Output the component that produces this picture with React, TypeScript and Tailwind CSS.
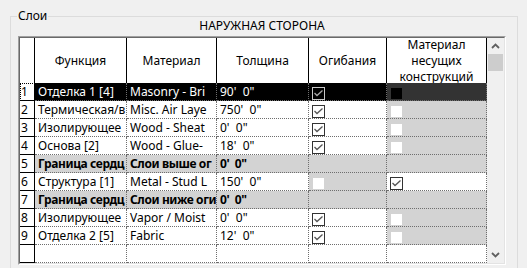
type Box = 'on' | 'onSel' | 'off' | 'offSel' | 'none'

type Layer = {
  n: string
  func: string
  mat: string
  thick: string
  wrap: Box
  struct: Box
  core?: boolean
  sel?: boolean
}

const layers: Layer[] = [
  { n: '1', func: 'Отделка 1 [4]', mat: 'Masonry - Bri', thick: `90'  0"`, wrap: 'onSel', struct: 'offSel', sel: true },
  { n: '2', func: 'Термическая/в', mat: 'Misc. Air Laye', thick: `750'  0"`, wrap: 'on', struct: 'off' },
  { n: '3', func: 'Изолирующее', mat: 'Wood - Sheat', thick: `0'  0"`, wrap: 'on', struct: 'off' },
  { n: '4', func: 'Основа [2]', mat: 'Wood - Glue-', thick: `18'  0"`, wrap: 'on', struct: 'off' },
  { n: '5', func: 'Граница сердц', mat: 'Слои выше ог', thick: `0'  0"`, wrap: 'none', struct: 'none', core: true },
  { n: '6', func: 'Структура [1]', mat: 'Metal - Stud L', thick: `150'  0"`, wrap: 'off', struct: 'on' },
  { n: '7', func: 'Граница сердц', mat: 'Слои ниже оги', thick: `0'  0"`, wrap: 'none', struct: 'none', core: true },
  { n: '8', func: 'Изолирующее', mat: 'Vapor / Moist', thick: `0'  0"`, wrap: 'on', struct: 'off' },
  { n: '9', func: 'Отделка 2 [5]', mat: 'Fabric', thick: `12'  0"`, wrap: 'on', struct: 'off' },
  { n: '', func: '', mat: '', thick: '', wrap: 'none', struct: 'none' },
]

function Check({ kind }: { kind: Box }) {
  if (kind === 'none') return null
  if (kind === 'off') return <div className="mt-[4px] ml-[3px] w-[13px] h-[13px] border border-[#d3d3d3] bg-white" />
  if (kind === 'offSel') return <div className="mt-[4px] ml-[3px] w-[13px] h-[13px] border border-[#333333] bg-black" />
  const sel = kind === 'onSel'
  return (
    <div
      className={
        sel
          ? 'mt-[4px] ml-[3px] w-[13px] h-[13px] border border-[#c8c8c8] bg-black'
          : 'mt-[4px] ml-[3px] w-[13px] h-[13px] border border-[#333333] bg-white'
      }
    >
      <svg width="11" height="11" viewBox="0 0 11 11">
        <polyline
          points="1.5,5 4,7.5 9.5,2.5"
          fill="none"
          stroke={sel ? '#a8a8a8' : '#555555'}
          strokeWidth="1.3"
        />
      </svg>
    </div>
  )
}

const cell = 'h-[18px] border-r border-b border-dotted border-[#6e6e6e] overflow-hidden whitespace-pre pl-[3px] leading-[17px]'

export default function App() {
  return (
    <div
      className="w-[527px] h-[268px] overflow-hidden bg-[#f0f0f0] pt-[16px] pl-[10px] text-[12px] text-black"
      style={{ fontFamily: '"Noto Sans", "Liberation Sans", sans-serif' }}
    >
      {/* группа «Слои» */}
      <div className="relative w-[508px] h-[270px] border border-[#dcdcdc] pl-[7px]">
        <span className="absolute -top-[9px] left-[6px] px-[1px] bg-[#f0f0f0] leading-[16px]">Слои</span>

        <div className="w-[488px] h-[15px] leading-[15px] pt-[1px] text-center">НАРУЖНАЯ СТОРОНА</div>

        {/* таблица слоёв */}
        <div className="mt-[4px] w-[488px] border-t border-l border-[#a0a0a0] border-r border-b border-r-white border-b-white">
          <div className="flex border-t border-l border-[#696969] border-r border-b border-r-[#e3e3e3] border-b-[#e3e3e3] bg-white">
            <div className="grid grid-cols-[15px_92px_90px_92px_78px_100px] grid-rows-[45px] auto-rows-[18px] w-[467px]">
              <div className="border-r border-black" />
              {['Функция', 'Материал', 'Толщина', 'Огибания'].map((h) => (
                <div key={h} className="border-r border-black flex items-center justify-center">
                  {h}
                </div>
              ))}
              <div className="border-r border-black flex flex-col items-center justify-center text-center leading-[16px]">
                <span>Материал</span>
                <span>несущих</span>
                <span>конструкций</span>
              </div>

              {layers.map((r, i) => {
                const bg = r.sel
                  ? 'bg-black text-white'
                  : r.core
                    ? 'bg-[#d3d3d3] font-bold tracking-[-0.4px]'
                    : 'bg-white'
                const wrapBg = r.sel ? 'bg-black' : r.core || r.wrap === 'off' ? 'bg-[#d3d3d3]' : 'bg-white'
                const structBg = r.sel ? 'bg-[#333333]' : r.core || r.struct === 'off' ? 'bg-[#d3d3d3]' : 'bg-white'
                return [
                  <div
                    key={`n${i}`}
                    className={
                      r.sel
                        ? 'h-[18px] border-r border-b border-black pl-[1px] leading-[17px] bg-white outline-1 outline-dotted outline-black -outline-offset-1'
                        : 'h-[18px] border-r border-b border-black pl-[1px] leading-[17px] bg-white'
                    }
                  >
                    {r.n}
                  </div>,
                  <div key={`f${i}`} className={`${cell} ${bg}`}>{r.func}</div>,
                  <div key={`m${i}`} className={`${cell} ${bg}`}>{r.mat}</div>,
                  <div key={`t${i}`} className={`${cell} ${bg}`}>{r.thick}</div>,
                  <div key={`w${i}`} className={`h-[18px] border-r border-b border-dotted border-[#6e6e6e] ${wrapBg}`}>
                    <Check kind={r.wrap} />
                  </div>,
                  <div key={`s${i}`} className={`h-[18px] border-r border-b border-dotted border-[#6e6e6e] ${structBg}`}>
                    <Check kind={r.struct} />
                  </div>,
                ]
              })}
            </div>

            {/* полоса прокрутки */}
            <div className="w-[17px] flex flex-col bg-[#f0f0f0]">
              <div className="h-[16px] flex items-center justify-center">
                <svg width="9" height="6" viewBox="0 0 9 6">
                  <polyline points="1,5 4.5,1.5 8,5" fill="none" stroke="#606060" strokeWidth="1.8" />
                </svg>
              </div>
              <div className="mx-[1px] h-[17px] bg-[#cdcdcd]" />
              <div className="flex-1" />
              <div className="h-[17px] flex items-center justify-center">
                <svg width="9" height="6" viewBox="0 0 9 6">
                  <polyline points="1,1 4.5,4.5 8,1" fill="none" stroke="#606060" strokeWidth="1.8" />
                </svg>
              </div>
            </div>
          </div>
        </div>
      </div>
    </div>
  )
}
